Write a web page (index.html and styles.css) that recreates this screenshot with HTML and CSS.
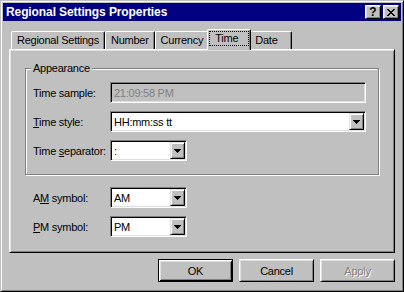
FILE: index.html
```html
<!DOCTYPE html>
<html lang="en">
<head>
    <meta charset="UTF-8">
    <title>Regional Settings Properties</title>
    <link rel="stylesheet" href="styles.css">
</head>
<body>
    <div class="window">
        <div class="titlebar">
            <span class="title">Regional Settings Properties</span>
            <div class="title-buttons">
                <button class="title-btn help">?</button>
                <button class="title-btn close">
                    <svg width="8" height="7" viewBox="0 0 8 7" shape-rendering="crispEdges">
                        <path d="M0 0h2v1H0zM6 0h2v1H6zM1 1h2v1H1zM5 1h2v1H5zM2 2h4v1H2zM3 3h2v1H3zM2 4h4v1H2zM1 5h2v1H1zM5 5h2v1H5zM0 6h2v1H0zM6 6h2v1H6z" fill="#000"/>
                    </svg>
                </button>
            </div>
        </div>

        <div class="tabs">
            <div class="tab">Regional Settings</div>
            <div class="tab">Number</div>
            <div class="tab">Currency</div>
            <div class="tab selected"><span class="focus">Time</span></div>
            <div class="tab">Date</div>
        </div>

        <div class="panel">
            <fieldset class="group">
                <legend>Appearance</legend>
                <div class="form-grid">
                    <label>Time sample:</label>
                    <div class="field wide disabled">21:09:58 PM</div>

                    <label><u>T</u>ime style:</label>
                    <div class="field combo wide">
                        <span class="value">HH:mm:ss tt</span>
                        <span class="drop"><svg width="7" height="4" viewBox="0 0 7 4" shape-rendering="crispEdges"><path d="M0 0h7v1H0zM1 1h5v1H1zM2 2h3v1H2zM3 3h1v1H3z" fill="#000"/></svg></span>
                    </div>

                    <label>Time <u>s</u>eparator:</label>
                    <div class="field combo narrow">
                        <span class="value">:</span>
                        <span class="drop"><svg width="7" height="4" viewBox="0 0 7 4" shape-rendering="crispEdges"><path d="M0 0h7v1H0zM1 1h5v1H1zM2 2h3v1H2zM3 3h1v1H3z" fill="#000"/></svg></span>
                    </div>
                </div>
            </fieldset>

            <div class="form-grid symbols">
                <label>A<u>M</u> symbol:</label>
                <div class="field combo narrow">
                    <span class="value">AM</span>
                    <span class="drop"><svg width="7" height="4" viewBox="0 0 7 4" shape-rendering="crispEdges"><path d="M0 0h7v1H0zM1 1h5v1H1zM2 2h3v1H2zM3 3h1v1H3z" fill="#000"/></svg></span>
                </div>

                <label><u>P</u>M symbol:</label>
                <div class="field combo narrow">
                    <span class="value">PM</span>
                    <span class="drop"><svg width="7" height="4" viewBox="0 0 7 4" shape-rendering="crispEdges"><path d="M0 0h7v1H0zM1 1h5v1H1zM2 2h3v1H2zM3 3h1v1H3z" fill="#000"/></svg></span>
                </div>
            </div>
        </div>

        <div class="actions">
            <button class="btn default">OK</button>
            <button class="btn">Cancel</button>
            <button class="btn" disabled>Apply</button>
        </div>
    </div>
</body>
</html>
```

FILE: styles.css
```css
* {
    box-sizing: border-box;
}
body {
    margin: 0;
    background: #c0c0c0;
    font-family: "Liberation Sans", Arial, sans-serif;
    font-size: 11px;
    letter-spacing: -0.25px;
    color: #000;
}
.window {
    width: 404px;
    height: 292px;
    padding: 2px;
    border: 1px solid;
    border-color: #c0c0c0 #000 #000 #c0c0c0;
    box-shadow: inset 1px 1px 0 #fff, inset -1px -1px 0 #808080;
    background: #c0c0c0;
    display: flex;
    flex-direction: column;
}

/* title bar */
.titlebar {
    height: 18px;
    flex: none;
    background: #000080;
    color: #fff;
    display: flex;
    align-items: center;
    justify-content: space-between;
    padding: 0 2px 0 3px;
}
.title {
    font-weight: bold;
    font-size: 12px;
    line-height: 18px;
    letter-spacing: -0.1px;
    white-space: nowrap;
}
.title-buttons {
    display: flex;
    gap: 2px;
}
.title-btn {
    width: 16px;
    height: 14px;
    padding: 0;
    border: 1px solid;
    border-color: #fff #000 #000 #fff;
    box-shadow: inset 1px 1px 0 #dfdfdf, inset -1px -1px 0 #808080;
    background: #c0c0c0;
    display: flex;
    align-items: center;
    justify-content: center;
    font-family: inherit;
    font-weight: bold;
    font-size: 12px;
    line-height: 12px;
    color: #000;
}
.title-btn svg {
    display: block;
}

/* tabs */
.tabs {
    flex: none;
    display: flex;
    align-items: flex-end;
    height: 20px;
    margin-top: 8px;
    padding-left: 8px;
}
.tab {
    height: 18px;
    min-width: 43px;
    padding: 2px 5px 0 5px;
    border: 1px solid;
    border-bottom: none;
    border-color: #fff #000 #000 #fff;
    border-radius: 2px 2px 0 0;
    box-shadow: inset -1px 0 0 #808080;
    line-height: 13px;
    white-space: nowrap;
    background: #c0c0c0;
}
.tab.selected {
    height: 21px;
    margin: 0 -2px -1px;
    padding: 1px 1px 0;
    position: relative;
    z-index: 1;
}
.focus {
    display: block;
    border: 1px dotted #000;
    padding: 0 10px 0 5px;
}

/* tab page */
.panel {
    flex: none;
    height: 204px;
    margin: 0 6px;
    padding: 12px 15px 0;
    border: 1px solid;
    border-color: #fff #000 #000 #fff;
    box-shadow: inset 1px 1px 0 #dfdfdf, inset -1px -1px 0 #808080;
}
.group {
    margin: 0;
    min-width: 0;
    padding: 7px 12px 13px 7px;
    border: 1px solid #808080;
    box-shadow: 1px 1px 0 #fff, inset 1px 1px 0 #fff;
}
.group legend {
    padding: 0 2px;
    margin-left: -2px;
    line-height: 13px;
    background: #c0c0c0;
}
.form-grid {
    display: grid;
    grid-template-columns: 77px auto;
    justify-content: start;
    align-items: center;
    row-gap: 8px;
}
.form-grid label {
    white-space: nowrap;
}
.symbols {
    margin: 12px 0 0 8px;
}

/* edit and combo boxes */
.field {
    height: 21px;
    padding: 0 3px;
    border: 1px solid;
    border-color: #808080 #fff #fff #808080;
    box-shadow: inset 1px 1px 0 #000, inset -1px -1px 0 #dfdfdf;
    background: #fff;
    display: flex;
    align-items: center;
    white-space: nowrap;
}
.wide {
    width: 256px;
}
.narrow {
    width: 77px;
}
.field.disabled {
    background: #c0c0c0;
    color: #808080;
}
.combo {
    padding: 1px 1px 1px 3px;
    align-items: stretch;
}
.combo .value {
    flex: 1;
    display: flex;
    align-items: center;
}
.drop {
    width: 15px;
    border: 1px solid;
    border-color: #dfdfdf #000 #000 #dfdfdf;
    box-shadow: inset 1px 1px 0 #fff, inset -1px -1px 0 #808080;
    background: #c0c0c0;
    display: flex;
    align-items: center;
    justify-content: center;
}
.drop svg {
    display: block;
}

/* dialog buttons */
.actions {
    flex: none;
    display: flex;
    justify-content: flex-end;
    gap: 6px;
    margin: 6px 6px 0;
}
.btn {
    width: 75px;
    height: 23px;
    padding: 0;
    border: 1px solid;
    border-color: #fff #000 #000 #fff;
    box-shadow: inset 1px 1px 0 #dfdfdf, inset -1px -1px 0 #808080;
    background: #c0c0c0;
    font-family: inherit;
    font-size: 11px;
    letter-spacing: inherit;
    color: #000;
}
.btn.default {
    border-color: #000;
    box-shadow: inset 1px 1px 0 #fff, inset -1px -1px 0 #000, inset 2px 2px 0 #dfdfdf, inset -2px -2px 0 #808080;
}
.btn:disabled {
    color: #808080;
    text-shadow: 1px 1px 0 #fff;
}
```
